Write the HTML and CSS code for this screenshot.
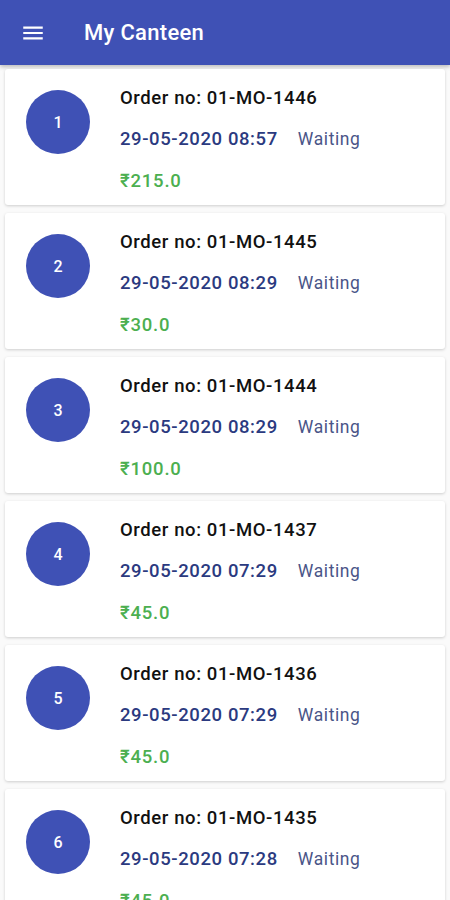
FILE: index.html
```html
<!DOCTYPE html>
<html lang="en">
<head>
  <meta charset="UTF-8" />
  <title>My Canteen</title>
  <link rel="stylesheet" href="styles.css">
</head>
<body>
  <header class="toolbar">
    <svg class="menu-icon" width="24" height="24" viewBox="0 0 24 24">
      <path fill="#fff" d="M3 18h18v-2H3v2zm0-5h18v-2H3v2zm0-7v2h18V6H3z"/>
    </svg>
    <h1>My Canteen</h1>
  </header>

  <div class="orders">
    <div class="order-card">
      <div class="badge">1</div>
      <div class="details">
        <div class="order-no">Order no: 01-MO-1446</div>
        <div class="meta"><span class="date">29-05-2020 08:57</span><span class="status">Waiting</span></div>
        <div class="amount">₹215.0</div>
      </div>
    </div>
    <div class="order-card">
      <div class="badge">2</div>
      <div class="details">
        <div class="order-no">Order no: 01-MO-1445</div>
        <div class="meta"><span class="date">29-05-2020 08:29</span><span class="status">Waiting</span></div>
        <div class="amount">₹30.0</div>
      </div>
    </div>
    <div class="order-card">
      <div class="badge">3</div>
      <div class="details">
        <div class="order-no">Order no: 01-MO-1444</div>
        <div class="meta"><span class="date">29-05-2020 08:29</span><span class="status">Waiting</span></div>
        <div class="amount">₹100.0</div>
      </div>
    </div>
    <div class="order-card">
      <div class="badge">4</div>
      <div class="details">
        <div class="order-no">Order no: 01-MO-1437</div>
        <div class="meta"><span class="date">29-05-2020 07:29</span><span class="status">Waiting</span></div>
        <div class="amount">₹45.0</div>
      </div>
    </div>
    <div class="order-card">
      <div class="badge">5</div>
      <div class="details">
        <div class="order-no">Order no: 01-MO-1436</div>
        <div class="meta"><span class="date">29-05-2020 07:29</span><span class="status">Waiting</span></div>
        <div class="amount">₹45.0</div>
      </div>
    </div>
    <div class="order-card">
      <div class="badge">6</div>
      <div class="details">
        <div class="order-no">Order no: 01-MO-1435</div>
        <div class="meta"><span class="date">29-05-2020 07:28</span><span class="status">Waiting</span></div>
        <div class="amount">₹45.0</div>
      </div>
    </div>
  </div>
</body>
</html>
```

FILE: styles.css
```css
body {
  margin: 0;
  font-family: Roboto, 'Noto Sans', sans-serif;
  background: #fafafa;
  color: #212121;
  overflow: hidden;
}

.toolbar {
  height: 65px;
  background: #3f51b5;
  display: flex;
  align-items: center;
  padding: 0 20px;
  box-sizing: border-box;
  box-shadow: 0 2px 4px rgba(0, 0, 0, 0.25);
}

.menu-icon {
  width: 26px;
  height: 26px;
  margin-right: 38px;
}

.toolbar h1 {
  margin: 0;
  font-size: 22px;
  letter-spacing: 0.3px;
  font-weight: 500;
  color: #fff;
}

.orders {
  padding: 4px 5px;
}

.order-card {
  display: flex;
  align-items: flex-start;
  height: 136px;
  box-sizing: border-box;
  margin-bottom: 8px;
  padding: 19px 20px 0 21px;
  background: #fff;
  border-radius: 3px;
  box-shadow: 0 1px 3px rgba(0, 0, 0, 0.18);
}

.badge {
  width: 64px;
  height: 64px;
  flex-shrink: 0;
  margin-top: 2px;
  margin-right: 30px;
  border-radius: 50%;
  background: #3f51b5;
  color: #fff;
  font-size: 16px;
  font-weight: 500;
  display: flex;
  align-items: center;
  justify-content: center;
}

.details {
  display: flex;
  flex-direction: column;
  gap: 21px;
}

.order-no {
  font-size: 18.5px;
  letter-spacing: 0.6px;
  line-height: 20px;
  font-weight: 500;
  color: #111;
}

.meta {
  line-height: 20px;
}

.date {
  font-size: 18.5px;
  letter-spacing: 0.6px;
  font-weight: 500;
  color: #2b3a80;
  margin-right: 20px;
}

.status {
  font-size: 17.5px;
  letter-spacing: 0.6px;
  color: #4a5588;
}

.amount {
  font-size: 18.5px;
  letter-spacing: 0.8px;
  line-height: 20px;
  font-weight: 500;
  color: #4caf50;
}
```
